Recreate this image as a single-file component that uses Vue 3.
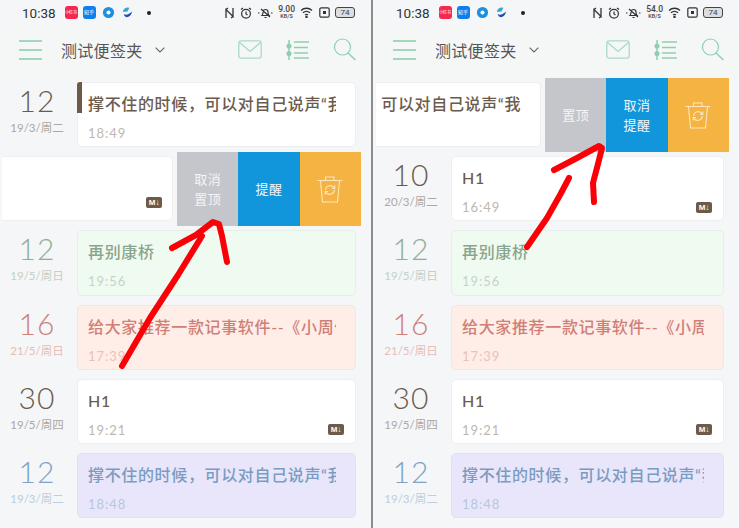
<script setup>
const longTitle = "撑不住的时候，可以对自己说声“我";

const panels = [
  {
    speed: "9.00",
    arrow: "M122 366 L150 318 L178 275 L202 236 M172 248 L196 235 L213 222 L219 224 L222 236 L227 262",
    rows: [
      { day: "12", date: "19/3/周二", title: longTitle, time: "18:49", tone: "plain", pinned: true },
      { swiped: true, md: true, top: "取消\n置顶", remind: "提醒" },
      { day: "12", date: "19/5/周日", title: "再别康桥", time: "19:56", tone: "green" },
      { day: "16", date: "21/5/周日", title: "给大家推荐一款记事软件--《小周便", time: "17:39", tone: "red" },
      { day: "30", date: "19/5/周四", title: "H1", time: "19:21", tone: "plain", md: true },
      { day: "12", date: "19/3/周二", title: longTitle, time: "18:48", tone: "purple" },
    ],
  },
  {
    speed: "54.0",
    arrow: "M525 247 L545 218 L558 195 L567 178 M552 170 L575 158 L597 146 L600 148 L597 160 L591 183 L592 202",
    rows: [
      { swiped: true, title: longTitle, top: "置顶", remind: "取消\n提醒" },
      { day: "10", date: "20/3/周二", title: "H1", time: "16:49", tone: "plain", md: true },
      { day: "12", date: "19/5/周日", title: "再别康桥", time: "19:56", tone: "green" },
      { day: "16", date: "21/5/周日", title: "给大家推荐一款记事软件--《小周便", time: "17:39", tone: "red" },
      { day: "30", date: "19/5/周四", title: "H1", time: "19:21", tone: "plain", md: true },
      { day: "12", date: "19/3/周二", title: longTitle, time: "18:48", tone: "purple" },
    ],
  },
];
</script>

<template>
  <div class="shots">
    <section v-for="panel in panels" :key="panel.speed" class="panel">
      <div class="status">
        <span class="clock">10:38</span>
        <span class="app app-red">小红书</span>
        <span class="app app-blue">知乎</span>
        <svg class="app-ico" viewBox="0 0 14 14">
          <circle cx="7" cy="7" r="6" fill="#1a8fe3" />
          <circle cx="7" cy="7" r="2.2" fill="#fff" />
        </svg>
        <svg class="app-ico" viewBox="0 0 14 14">
          <path d="M2 6.5a5 5 0 0 1 7-4.5L7 6z" fill="#2fa9d8" />
          <path d="M3 9c3 1 6 0 9-3-1 4-3 6-6 6-1.500 0-2.500-1-3-3z" fill="#1e4fb8" />
        </svg>
        <i class="dot"></i>
        <span class="spacer"></span>
        <svg class="sys" width="11" height="12" viewBox="0 0 11 12" fill="none" stroke="#333" stroke-width="1.300">
          <path d="M2 11V2.500L9 9.500V1M2 2.500L4 1M9 9.500L7 11" />
        </svg>
        <svg class="sys" width="12" height="12" viewBox="0 0 12 12" fill="none" stroke="#333" stroke-width="1.200">
          <circle cx="6" cy="6.800" r="4.400" />
          <path d="M6 4.500V7L7.500 8M1 2.500L3 1M11 2.500L9 1" />
        </svg>
        <svg class="sys" width="16" height="12" viewBox="0 0 16 12" fill="none" stroke="#333" stroke-width="1.200">
          <path d="M5 8.500c1-1 1-2 1-3.500a2.500 2.500 0 0 1 5 0c0 1.500 0 2.500 1 3.500zM7.500 10.500h2M4 2l9 8M1 6h1.500M14 6h1.500" />
        </svg>
        <span class="speed"><b>{{ panel.speed }}</b><b class="unit">KB/S</b></span>
        <svg class="sys" width="14" height="11" viewBox="0 0 14 11" fill="none" stroke="#333" stroke-width="1.300">
          <path d="M1 3.500c3-3 8-3 11 0M3 5.800c2-2 5-2 7 0M5 8c1-.8 2-.8 3 0" />
          <circle cx="6.500" cy="10" r=".6" fill="#333" />
        </svg>
        <svg class="sys" width="11" height="11" viewBox="0 0 11 11" fill="none" stroke="#333" stroke-width="1.200">
          <rect x=".8" y=".8" width="9.400" height="9.400" rx="1.500" />
          <rect x="4" y="4" width="3" height="3" fill="#333" stroke="none" />
        </svg>
        <span class="battery">74</span>
      </div>

      <header class="bar">
        <div class="burger"><i></i><i></i><i></i></div>
        <h1 class="folder">测试便签夹</h1>
        <svg class="chev" width="10" height="6" viewBox="0 0 10 6" fill="none" stroke="#666" stroke-width="1.100">
          <path d="M.6 .6L5 5L9.400 .6" />
        </svg>
        <span class="spacer"></span>
        <svg class="tool" width="24" height="19" viewBox="0 0 24 19" fill="none" stroke="#a8dbc3" stroke-width="1.300">
          <rect x=".8" y=".8" width="22.400" height="17.400" rx="2.500" />
          <path d="M1.500 2.500L12 11.500L22.500 2.500" />
        </svg>
        <svg class="tool" width="23" height="20" viewBox="0 0 23 20" fill="none" stroke="#8fcfb1" stroke-width="1.500">
          <path d="M3 0V20M8 2H23M8 7.500H22M8 13H22M8 18H23" />
          <circle cx="3" cy="6" r="1.800" fill="#8fcfb1" />
          <circle cx="3" cy="13.500" r="1.800" fill="#8fcfb1" />
        </svg>
        <svg class="tool" width="23" height="23" viewBox="0 0 23 23" fill="none" stroke="#8fcfb1" stroke-width="1.200">
          <circle cx="9.500" cy="9" r="8" />
          <path d="M15 15L22.500 22" stroke-width="1.400" />
        </svg>
      </header>

      <div class="list">
        <template v-for="(row, i) in panel.rows" :key="i">
          <div v-if="row.swiped" class="row row-swiped">
            <div class="card card-cut">
              <p v-if="row.title" class="title">{{ row.title }}</p>
              <span v-if="row.md" class="md md-cut">M↓</span>
            </div>
            <div class="actions">
              <button class="act act-top">{{ row.top }}</button>
              <button class="act act-remind">{{ row.remind }}</button>
              <button class="act act-del">
                <svg width="26" height="27" viewBox="0 0 26 27" fill="none" stroke="#fde6bd" stroke-width="1.100">
                  <path d="M.5 4.500H25.500M8.500 4.500V1H17V4.500M3.500 4.500L5.500 26H20.500L22.500 4.500" />
                  <path d="M8.500 14a4.700 4.700 0 0 1 8-3l1 1.200M17.500 14a4.700 4.700 0 0 1-8 3l-1-1.200" />
                  <path d="M17.800 9.500V12.500H15M8.200 18.500V15.500H11" />
                </svg>
              </button>
            </div>
          </div>

          <div v-else class="row" :class="'tone-' + row.tone">
            <div class="when">
              <div class="day">{{ row.day }}</div>
              <div class="date">{{ row.date }}</div>
            </div>
            <div class="card">
              <i v-if="row.pinned" class="pin"></i>
              <p class="title">{{ row.title }}</p>
              <div class="foot">
                <span class="time">{{ row.time }}</span>
                <span v-if="row.md" class="md">M↓</span>
              </div>
            </div>
          </div>
        </template>
      </div>

      <svg class="scrawl" width="739" height="528" viewBox="0 0 739 528" fill="none">
        <path :d="panel.arrow" stroke="#fb0007" stroke-width="6" stroke-linecap="round" stroke-linejoin="round" />
      </svg>
    </section>
  </div>
</template>

<style scoped>
.shots {
  display: flex;
  width: 739px;
  height: 528px;
  overflow: hidden;
  background: #f4f6f7;
  font-family: Lato, "Noto Sans CJK SC", sans-serif;
}

.panel {
  flex: none;
  width: 371px;
  height: 528px;
  overflow: hidden;
  position: relative;
  box-sizing: border-box;
}

.panel + .panel {
  width: 368px;
  border-left: 2px solid #8c8c8c;
  padding-left: 1px;
}

.scrawl {
  position: absolute;
  top: 0;
  left: 0;
  pointer-events: none;
}

.panel + .panel .scrawl {
  left: -371px;
}

.spacer {
  flex: 1;
}

/* status bar */
.status {
  height: 25px;
  display: flex;
  align-items: center;
  gap: 5px;
  padding: 0 15px 0 22px;
}

.clock {
  font-family: Roboto, sans-serif;
  font-size: 13.500px;
  color: #333;
  margin-right: 4px;
}

.app {
  width: 13px;
  height: 13px;
  border-radius: 3px;
  font-size: 4px;
  line-height: 13px;
  text-align: center;
  color: #fff;
  white-space: nowrap;
  overflow: hidden;
}

.app-red {
  background: #f5294d;
}

.app-blue {
  background: #0f7fee;
  font-size: 5px;
}

.app-ico {
  width: 13px;
  height: 13px;
  margin-left: 1px;
}

.dot {
  width: 4px;
  height: 4px;
  margin-left: 8px;
  border-radius: 50%;
  background: #222;
}

.sys {
  display: block;
  margin-left: 0;
}

.speed {
  display: flex;
  flex-direction: column;
  align-items: center;
  font-family: Roboto, sans-serif;
  font-size: 8.500px;
  line-height: 7px;
  color: #444;
}

.speed b {
  font-weight: 500;
}

.speed .unit {
  font-size: 5.500px;
  line-height: 6px;
}

.battery {
  width: 18px;
  height: 9px;
  border: 1px solid #444;
  border-radius: 3px;
  background: #ddd;
  font-family: Roboto, sans-serif;
  font-size: 8px;
  line-height: 9px;
  text-align: center;
  color: #444;
  margin-right: 1px;
}

/* header */
.bar {
  height: 53px;
  display: flex;
  align-items: center;
  padding: 0 15px 4px 19px;
  box-sizing: border-box;
  background: #f5f7f7;
}

.burger {
  width: 23px;
  height: 20px;
  display: flex;
  flex-direction: column;
  justify-content: space-between;
  margin-right: 19px;
}

.burger i {
  height: 2px;
  background: #a3d7bb;
}

.folder {
  margin: 0;
  font-size: 16px;
  font-weight: 400;
  letter-spacing: 0.300px;
  color: #555;
}

.chev {
  margin-left: 12px;
}

.tool {
  display: block;
}

.tool:nth-of-type(n) {
  margin-left: 24px;
}

/* list */
.row {
  height: 74.200px;
  display: flex;
  box-sizing: border-box;
  padding: 4px 15px 5px 0;
}

.when {
  width: 77px;
  flex: none;
  text-align: center;
  padding-right: 3px;
  box-sizing: border-box;
}

.day {
  font-size: 30px;
  font-weight: 300;
  line-height: 36px;
  letter-spacing: 1px;
}

.date {
  font-size: 11.500px;
  line-height: 20px;
  white-space: nowrap;
}

.card {
  flex: 1;
  min-width: 0;
  position: relative;
  padding: 9px 19px 0 10px;
  box-sizing: border-box;
  border-radius: 5px;
  border: 1px solid #eceef0;
  background: #fff;
}

.pin {
  position: absolute;
  top: -1px;
  left: -1px;
  width: 5px;
  height: 31px;
  border-radius: 3px 0 0 0;
  background: #6e5a48;
}

.title {
  margin: 0;
  font-size: 16px;
  font-weight: 500;
  line-height: 24px;
  letter-spacing: 0.650px;
  white-space: nowrap;
  overflow: hidden;
  color: #6c5b4c;
}

.foot {
  display: flex;
  align-items: center;
  justify-content: space-between;
  margin-top: 9px;
  margin-right: -8px;
}

.time {
  font-size: 13px;
  letter-spacing: 1px;
  line-height: 16px;
  color: #bcb7b1;
}

.md {
  width: 16px;
  height: 11px;
  border-radius: 2px;
  background: #6e5a48;
  font-family: "Liberation Sans", sans-serif;
  font-size: 8px;
  font-weight: 700;
  line-height: 11px;
  text-align: center;
  color: #fff;
  white-space: nowrap;
}

.md-cut {
  position: absolute;
  right: 10px;
  bottom: 12px;
}

.tone-plain .day {
  color: #6c5b4c;
}

.tone-plain .date {
  color: #aca8a3;
}

.tone-green .day {
  color: #8fae94;
}

.tone-green .date {
  color: #c3d0c5;
}

.tone-green .card {
  background: #effbf0;
  border-color: #e6efe7;
}

.tone-green .title {
  color: #8aa58d;
}

.tone-green .time {
  color: #c5d4c7;
}

.tone-red .day {
  color: #cf7f78;
}

.tone-red .date {
  color: #e6bdb9;
}

.tone-red .card {
  background: #ffeee7;
  border-color: #f2e6e1;
}

.tone-red .title {
  color: #cf7f78;
}

.tone-red .time {
  color: #ecc0ba;
}

.tone-purple .day {
  color: #7fa3c7;
}

.tone-purple .date {
  color: #bccee0;
}

.tone-purple .card {
  background: #e9e6fb;
  border-color: #e2e1ef;
}

.tone-purple .title {
  color: #7a9cc0;
}

.tone-purple .time {
  color: #b6c6dd;
}

/* swiped row */
.row-swiped {
  padding: 0 10px 0 2px;
  gap: 4px;
}

.card-cut {
  margin: 4px 0 5px;
  display: flex;
  justify-content: flex-end;
  overflow: hidden;
  border-left: 0;
  border-radius: 0 5px 5px 0;
}

.card-cut .title {
  flex: none;
}

.actions {
  flex: none;
  display: flex;
}

.act {
  width: 61.300px;
  padding: 0;
  border: 0;
  font-family: inherit;
  font-size: 13px;
  line-height: 20px;
  letter-spacing: 0.500px;
  white-space: pre-line;
  color: #f4f4f6;
  display: flex;
  align-items: center;
  justify-content: center;
}

.act-top {
  background: #c5c6cb;
}

.act-remind {
  background: #1296db;
}

.act-del {
  background: #f5b342;
}
</style>
